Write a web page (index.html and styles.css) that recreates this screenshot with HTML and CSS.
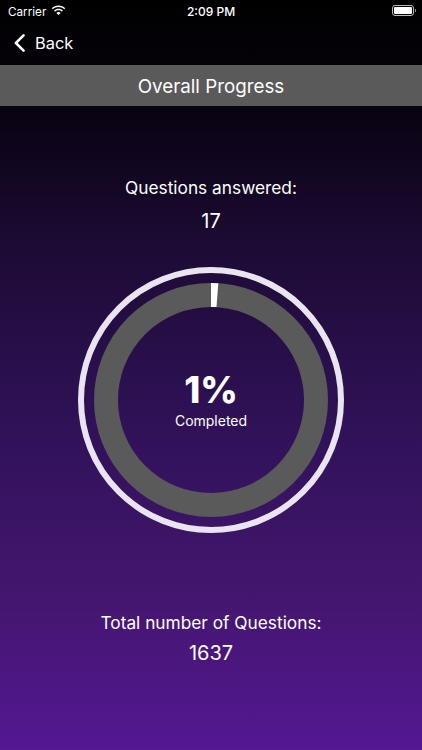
FILE: index.html
```html
<!DOCTYPE html>
<html lang="en">
<head>
<meta charset="utf-8">
<title>Overall Progress</title>
<link rel="stylesheet" href="styles.css">
</head>
<body>
<div class="screen">
  <header class="status">
    <div class="status-left">
      <span>Carrier</span>
      <svg class="wifi" viewBox="0 0 16 12" width="15" height="11"><path d="M8 2.200c2.400 0 4.600.9 6.200 2.500l1.100-1.200C13.400 1.600 10.800.5 8 .5S2.600 1.600.7 3.500l1.100 1.200C3.400 3.100 5.600 2.200 8 2.200z" fill="#fff"/><path d="M8 5.800c1.400 0 2.700.5 3.700 1.500l1.100-1.200C11.500 4.800 9.800 4.100 8 4.100s-3.500.7-4.800 2l1.100 1.200c1-1 2.300-1.500 3.700-1.500z" fill="#fff"/><path d="M8 7.700c-.9 0-1.700.3-2.300.9L8 11l2.300-2.400c-.6-.6-1.400-.9-2.300-.9z" fill="#fff"/></svg>
    </div>
    <span class="status-time">2:09 PM</span>
    <div class="battery"><span class="battery-fill"></span></div>
  </header>
  <nav class="nav">
    <svg class="chevron" viewBox="0 0 12 20" width="11" height="18"><path d="M10.500 1.500 2 10l8.500 8.500" fill="none" stroke="#fff" stroke-width="2.800" stroke-linecap="round" stroke-linejoin="round"/></svg>
    <span>Back</span>
  </nav>
  <h1 class="title">Overall Progress</h1>
  <main class="content">
    <p class="label first">Questions answered:</p>
    <p class="value">17</p>
    <div class="ring">
      <svg viewBox="0 0 266 266" width="266" height="266">
        <circle cx="133" cy="133" r="130" fill="none" stroke="#eae4f1" stroke-width="6"/>
        <circle cx="133" cy="133" r="105" fill="none" stroke="#5a5a5a" stroke-width="24"/>
        <path d="M133 16 L140.300 16.300 L138.500 40.100 L133 40 Z" fill="#fff"/>
      </svg>
      <div class="ring-text">
        <span class="percent">1%</span>
        <span class="completed">Completed</span>
      </div>
    </div>
    <p class="label total">Total number of Questions:</p>
    <p class="value last">1637</p>
  </main>
</div>
</body>
</html>
```
FILE: styles.css
```css
* { box-sizing: border-box; }
html, body { margin: 0; padding: 0; }
body { font-family: Inter, "Liberation Sans", sans-serif; color: #fff; }
.screen {
  width: 422px;
  height: 750px;
  overflow: hidden;
  display: flex;
  flex-direction: column;
  background: linear-gradient(180deg, #000 0, #06020c 90px, #1d0b35 250px, #31125a 440px, #44166f 600px, #531892 750px);
}
.status {
  height: 21px;
  padding: 2px 6px 0 8px;
  display: flex;
  align-items: center;
  justify-content: space-between;
  font-size: 11.700px;
  position: relative;
}
.status-left { display: flex; align-items: center; gap: 5px; }
.wifi { display: block; margin-top: -2px; }
.status-time { position: absolute; left: 0; right: 0; text-align: center; font-size: 12px; font-weight: 500; }
.battery {
  width: 22px;
  height: 11px;
  margin-right: 2px;
  margin-top: -2px;
  border: 1px solid #bbb;
  border-radius: 3px;
  padding: 1px;
  position: relative;
}
.battery::after {
  content: "";
  position: absolute;
  right: -3px;
  top: 3px;
  width: 1px;
  height: 3px;
  background: #888;
}
.battery-fill { display: block; height: 100%; background: #fff; border-radius: 1px; }
.nav {
  height: 44px;
  padding: 0 0 0 14px;
  display: flex;
  align-items: center;
  gap: 10px;
  font-size: 16.400px;
}
.chevron { display: block; }
.title {
  margin: 0;
  height: 41px;
  background: #5a5a5a;
  font-size: 18.800px;
  font-weight: 400;
  line-height: 43px;
  text-align: center;
}
.content {
  display: flex;
  flex-direction: column;
  align-items: center;
}
.label, .value { margin: 0; font-size: 17.300px; line-height: 22px; text-align: center; }
.label.first { margin-top: 71px; }
.value { margin-top: 11px; font-size: 20px; }
.ring { position: relative; width: 266px; height: 266px; margin-top: 35px; }
.ring svg { display: block; }
.ring-text {
  position: absolute;
  inset: 0;
  display: flex;
  flex-direction: column;
  align-items: center;
  justify-content: center;
  padding-top: 2px;
}
.percent { font-size: 36.500px; font-weight: 800; line-height: 40px; }
.completed { font-size: 14px; line-height: 22px; }
.label.total { margin-top: 79px; }
.value.last { margin-top: 8px; }
```
